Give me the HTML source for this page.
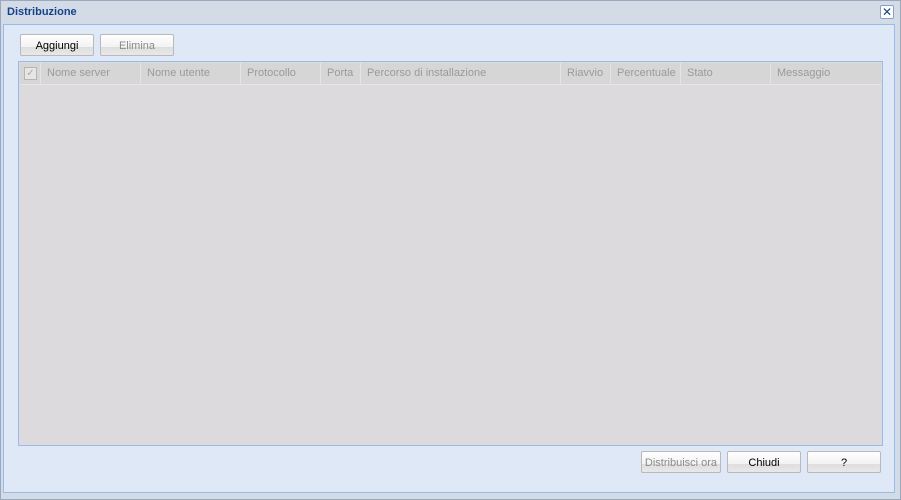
<!DOCTYPE html>
<html><head><style>
body{margin:0;width:901px;height:500px;background:#fff;font-family:"Liberation Sans",sans-serif;font-size:11px;position:relative;overflow:hidden}
.win{position:absolute;left:0;top:0;width:899px;height:498px;border:1px solid #99a8bc;background:#d3dce6}
.title{position:absolute;left:6px;top:5px;font-weight:bold;color:#15428b;font-size:11px}
.x{position:absolute;left:879px;top:4px;width:12px;height:12px;border:1px solid #8aa0c4;background:#fff;color:#15428b;font-size:12px;line-height:12px;text-align:center;border-radius:2px}
.body{position:absolute;left:2px;top:23px;width:890px;height:467px;background:#dfe8f6;border:1px solid #99bbe8}
.btn{position:absolute;height:20px;border:1px solid #b9b9b9;border-radius:2px;background:linear-gradient(#fff 0,#f3f3f3 60%,#dedede 61%,#e8e8e8 100%);text-align:center;line-height:22px;color:#000;font-size:11px}
.dis{color:#8a8a8a}
.grid{position:absolute;left:17px;top:60px;width:863px;height:383px;border:1px solid #99bbe8;background:#dcdadd}
.hdr{position:absolute;left:1px;top:1px;right:1px;height:21px;background:#d6d6d6;border-bottom:1px solid #e6e6e6}
.c{position:absolute;top:0;height:21px;line-height:21px;color:#9a9a9a;border-left:1px solid #e4e4e4;padding-left:6px;box-sizing:border-box}
.chk{position:absolute;left:4px;top:4px;width:11px;height:11px;border:1px solid #b5b5b5;background:#e6e6e6;color:#aaa;font-size:10px;line-height:11px;text-align:center}
</style></head><body>
<div class="win">
<div class="title">Distribuzione</div>
<div class="x">✕</div>
<div class="body"></div>
<div class="btn" style="left:19px;top:33px;width:72px">Aggiungi</div>
<div class="btn dis" style="left:99px;top:33px;width:72px">Elimina</div>
<div class="grid"><div class="hdr">
<div class="chk">✓</div>
<div class="c" style="left:20px;width:100px">Nome server</div>
<div class="c" style="left:120px;width:100px">Nome utente</div>
<div class="c" style="left:220px;width:80px">Protocollo</div>
<div class="c" style="left:300px;width:40px">Porta</div>
<div class="c" style="left:340px;width:200px">Percorso di installazione</div>
<div class="c" style="left:540px;width:50px">Riavvio</div>
<div class="c" style="left:590px;width:70px">Percentuale</div>
<div class="c" style="left:660px;width:90px">Stato</div>
<div class="c" style="left:750px;width:110px">Messaggio</div>
</div></div>
<div class="btn dis" style="left:640px;top:450px;width:78px">Distribuisci ora</div>
<div class="btn" style="left:726px;top:450px;width:72px">Chiudi</div>
<div class="btn" style="left:806px;top:450px;width:72px">?</div>
</div>
</body></html>
